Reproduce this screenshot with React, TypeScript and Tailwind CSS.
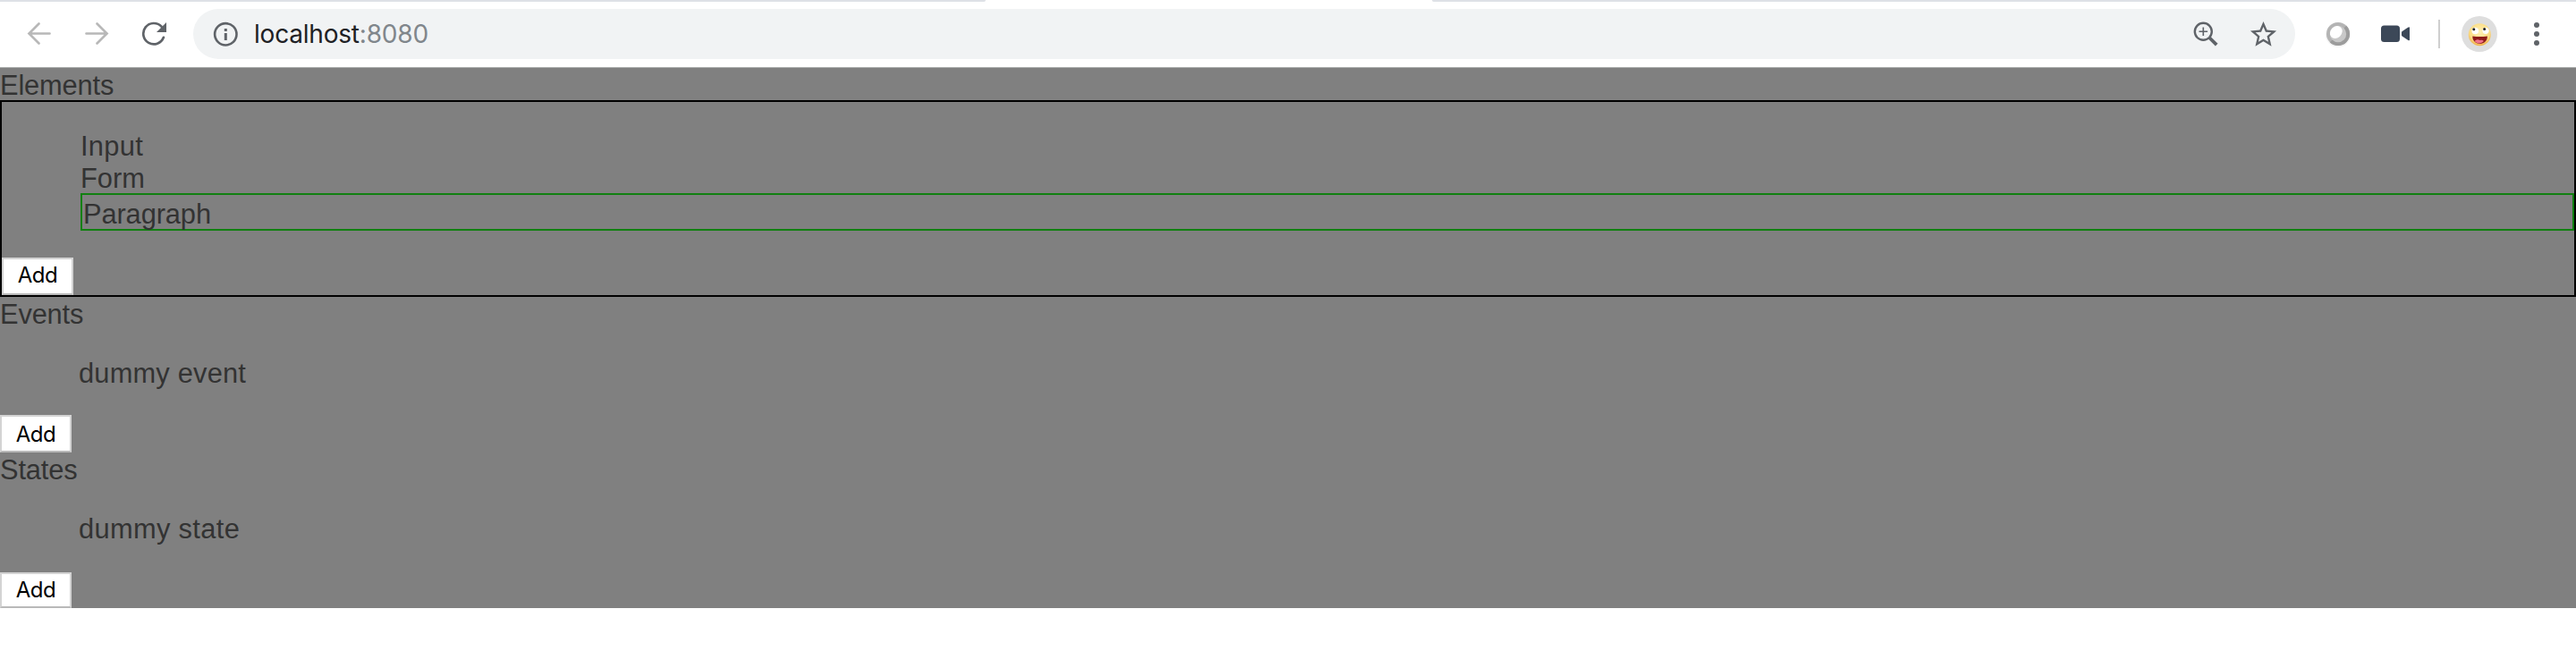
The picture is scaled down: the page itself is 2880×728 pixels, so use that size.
import type { ReactNode } from "react";

const page = 'font-["Liberation_Sans",Arial,sans-serif]';

function AddressBar() {
  return (
    <div className="ml-[22px] flex h-14 w-[2350px] items-center rounded-full bg-[#f1f3f4] pl-[22px]">
      <svg viewBox="0 0 28 28" className="h-7 w-7 shrink-0">
        <circle cx="14.3" cy="14.3" r="12.2" fill="none" stroke="#5f6368" strokeWidth="2.6" />
        <path d="M12.8 8h3v3h-3zM12.8 13h3v8h-3z" fill="#5f6368" />
      </svg>
      <div className="ml-[18px] font-[Inter,sans-serif] text-[28px] leading-none tracking-[-0.2px] whitespace-nowrap text-[#202124]">
        localhost<span className="text-[#80868b]">:8080</span>
      </div>
      <svg viewBox="0 0 28 28" className="ml-auto h-7 w-7 shrink-0" fill="none" stroke="#5f6368">
        <circle cx="11.3" cy="11.3" r="9.5" strokeWidth="2.4" />
        <path d="M6.5 11.3h9.6M11.3 6.5v9.6" strokeWidth="1.6" />
        <path d="M18 18l8.2 8.2" strokeWidth="3.8" />
      </svg>
      <svg viewBox="0 0 24 24" className="mr-[18px] ml-[33px] h-[35px] w-[35px] shrink-0" fill="#5f6368">
        <path d="M22 9.24l-7.19-.62L12 2 9.19 8.63 2 9.24l5.46 4.73L5.82 21 12 17.27 18.18 21l-1.63-7.03L22 9.24zM12 15.4l-3.76 2.27 1-4.28-3.32-2.88 4.38-.38L12 6.1l1.71 4.04 4.38.38-3.32 2.88 1 4.28L12 15.4z" />
      </svg>
    </div>
  );
}

function Avatar() {
  return (
    <svg viewBox="0 0 40 40" className="ml-6 h-10 w-10 shrink-0">
      <defs>
        <radialGradient id="face" cx="50%" cy="38%" r="65%">
          <stop offset="0" stopColor="#fff0b4" />
          <stop offset="0.7" stopColor="#fbdc83" />
          <stop offset="1" stopColor="#eda23c" />
        </radialGradient>
      </defs>
      <circle cx="20" cy="20" r="20" fill="#dedede" />
      <circle cx="20.3" cy="20.7" r="12.5" fill="url(#face)" />
      <circle cx="15.3" cy="16.5" r="3.8" fill="#fff" />
      <circle cx="27" cy="16.3" r="3.6" fill="#fff" />
      <circle cx="13.8" cy="14.8" r="1.5" fill="#222" />
      <circle cx="25.6" cy="14.6" r="1.5" fill="#222" />
      <path d="M12.3 22.6q8.3 1 16.6 0c.2 5-3.4 8.3-8.3 8.3s-8.5-3.3-8.3-8.3z" fill="#8e1b18" />
      <path d="M14.6 28c2-2.2 4.4-2 6-.9 1.8-.8 3.2-.3 4.3 1-2.7 3-7.7 3.2-10.3-.1z" fill="#f0748a" />
    </svg>
  );
}

function Toolbar() {
  return (
    <header className="h-[76px] border-b border-[#a9acab] bg-white">
      <div className="flex h-[2px] justify-between">
        <div className="w-[1102px] rounded-br-[2px] bg-[#dee1e6]" />
        <div className="w-[1279px] rounded-bl-[2px] bg-[#dee1e6]" />
      </div>
      <div className="mt-2 flex h-14 items-center pl-[30px]">
        <svg
          viewBox="0 0 28 28"
          className="h-7 w-7 shrink-0"
          fill="none"
          stroke="#b8b8b8"
          strokeWidth="2.7"
          strokeLinecap="round"
        >
          <path d="M25.5 13.5H3M13.5 2.5l-11 11 11 11" />
        </svg>
        <svg
          viewBox="0 0 28 28"
          className="ml-9 h-7 w-7 shrink-0"
          fill="none"
          stroke="#b8b8b8"
          strokeWidth="2.7"
          strokeLinecap="round"
        >
          <path d="M2.5 13.5H25M14.5 2.5l11 11-11 11" />
        </svg>
        <svg viewBox="0 0 28 28" className="ml-9 h-7 w-7 shrink-0">
          <path
            d="M22.5 5.7A11.7 11.7 0 1 0 24.9 17.8"
            fill="none"
            stroke="#5f6368"
            strokeWidth="2.7"
            strokeLinecap="round"
          />
          <path d="M28 1v11H17z" fill="#5f6368" />
        </svg>
        <div className="w-2" />
        <AddressBar />
        <svg viewBox="0 0 30 30" className="ml-[33px] h-[30px] w-[30px] shrink-0">
          <circle cx="15" cy="15.8" r="14" fill="#f4f4f4" />
          <circle cx="15" cy="15" r="13" fill="#b4b4b4" />
          <path d="M24.2 5.8A13 13 0 0 1 5.8 24.2z" fill="#9c9c9c" />
          <circle cx="15" cy="15" r="9.2" fill="#c8c8c8" />
          <ellipse cx="12.8" cy="13" rx="7.6" ry="6.2" fill="#fff" transform="rotate(-45 12.8 13)" />
        </svg>
        <svg viewBox="0 0 32 20" className="ml-[33px] h-5 w-8 shrink-0" fill="#3c4858">
          <rect x="0" y="0.5" width="21" height="18.5" rx="3.5" />
          <path d="M23 8.3q0-.8.7-1.3L30 2.7q2-1.2 2 .3v13.5q0 1.5-2 .3L23.7 12.5q-.7-.5-.7-1.3z" />
        </svg>
        <div className="ml-8 h-8 w-0.5 shrink-0 bg-[#cfcfcf]" />
        <Avatar />
        <div className="ml-[41px] flex flex-col gap-1">
          <span className="h-1.5 w-1.5 rounded-full bg-[#5f6368]" />
          <span className="h-1.5 w-1.5 rounded-full bg-[#5f6368]" />
          <span className="h-1.5 w-1.5 rounded-full bg-[#5f6368]" />
        </div>
      </div>
    </header>
  );
}

function AddButton({ box }: { box: string }) {
  return (
    <button
      className={`flex w-20 items-center justify-center border-2 border-[#d3d3d3] border-b-[#b9b9b9] bg-white font-[Inter,sans-serif] text-[24px] leading-none tracking-[-0.5px] text-black ${box}`}
    >
      Add
    </button>
  );
}

function Title({ children }: { children: ReactNode }) {
  return <h2 className="h-9 tracking-[-0.15px]">{children}</h2>;
}

function List({ children }: { children: ReactNode }) {
  return <ul className="my-[30px] pl-[88px]">{children}</ul>;
}

export default function App() {
  return (
    <div className="h-[728px] w-[2880px] overflow-hidden bg-white">
      <Toolbar />
      <main className={`flow-root bg-[#808080] text-[30.8px] leading-[39px] text-[#333] ${page}`}>
        <Title>Elements</Title>
        <section className="flow-root h-[220px] border-2 border-black">
          <List>
            <li className="h-9 tracking-[0.3px]">Input</li>
            <li className="h-9">Form</li>
            <li className="h-[42px] border-2 border-[#108010] pt-0.5 pl-px tracking-[-0.1px]">Paragraph</li>
          </List>
          <AddButton box="h-[42px] pb-[3px]" />
        </section>
        <section className="flow-root">
          <Title>Events</Title>
          <List>
            <li className="h-9 tracking-[0.2px]">dummy event</li>
          </List>
          <AddButton box="h-[42px] pt-px" />
        </section>
        <section className="flow-root">
          <Title>States</Title>
          <List>
            <li className="h-[38px] tracking-[0.35px]">dummy state</li>
          </List>
          <AddButton box="h-10" />
        </section>
      </main>
    </div>
  );
}
